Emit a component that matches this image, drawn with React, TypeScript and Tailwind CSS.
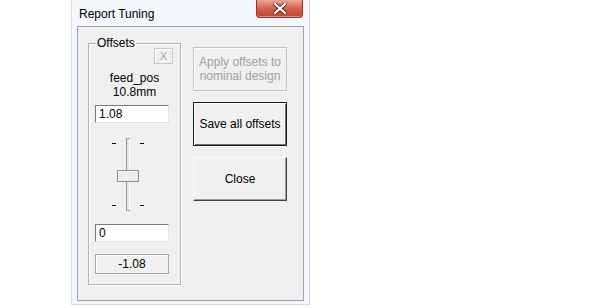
import React from 'react';

const font = "font-['Liberation_Sans',Arial,sans-serif]";

const SliderDrawing = () => (
  <svg width="60" height="80" viewBox="0 0 60 80" className="block">
    {/* ticks */}
    <line x1="14" y1="6.5" x2="18" y2="6.5" stroke="#000" />
    <line x1="42" y1="6.5" x2="46" y2="6.5" stroke="#000" />
    <line x1="14" y1="68.5" x2="18" y2="68.5" stroke="#000" />
    <line x1="42" y1="68.5" x2="46" y2="68.5" stroke="#000" />
    {/* track */}
    <rect x="28.5" y="1.5" width="3" height="72" fill="#e3e3e3" stroke="#9c9c9c" />
    <line x1="31.5" y1="2" x2="31.5" y2="73" stroke="#fff" />
    {/* thumb */}
    <rect x="19.5" y="33.5" width="21" height="11" fill="#ececec" stroke="#8e8e8e" />
    <line x1="20" y1="34.5" x2="40" y2="34.5" stroke="#fff" />
    <line x1="20.5" y1="34" x2="20.5" y2="44" stroke="#fff" />
  </svg>
);

const Field = ({ value }: { value: string }) => (
  <div className="ml-[6px] h-[18px] w-[74px] border border-t-[#7a7a7a] border-l-[#7a7a7a] border-b-[#e3e3e3] border-r-[#e3e3e3] bg-white pl-[3px] text-[12px] leading-[16px] text-black">
    {value}
  </div>
);

const WinButton = ({ children, variant }: { children: React.ReactNode; variant: 'disabled' | 'default' | 'normal' }) => {
  const cls =
    variant === 'disabled'
      ? 'border border-[#c4c4c4] text-[#a0a0a0] shadow-[inset_1px_1px_0_#fff]'
      : variant === 'default'
      ? 'border border-[#1e1e1e] text-black shadow-[inset_1px_1px_0_#fff,inset_-1px_-1px_0_#6f6f6f]'
      : 'border border-t-[#fafafa] border-l-[#fafafa] border-r-[#404040] border-b-[#404040] text-black shadow-[inset_-1px_-1px_0_#a0a0a0]';
  return (
    <div className={`flex h-[44px] w-[94px] items-center justify-center bg-[#f0f0f0] text-center text-[12px] leading-[14px] ${cls}`}>
      {children}
    </div>
  );
};

export default function App() {
  return (
    <div className={`h-[308px] w-[600px] bg-white ${font}`}>
      <div className="ml-[71px] flex h-[305px] w-[239px] flex-col border-x border-b border-[#d3dbe5] bg-[#f4f7fb]">
        {/* title bar */}
        <div className="flex h-[26px] items-start">
          <div className="pl-[7px] pt-[7px] text-[12px] leading-[14px] text-black">Report Tuning</div>
          <div className="ml-auto mr-[6px] flex h-[18px] w-[47px] items-center justify-center rounded-b-[4px] border border-t-0 border-[#8b3a2a] bg-gradient-to-b from-[#e9a796] via-[#d2624b] to-[#c2402a] shadow-[inset_0_-1px_0_#e58e78]">
            <svg width="14" height="11" viewBox="0 0 14 11">
              <path d="M2 1 L12 10 M12 1 L2 10" stroke="#5a2418" strokeWidth="4" strokeLinecap="square" />
              <path d="M2 1 L12 10 M12 1 L2 10" stroke="#fff" strokeWidth="2.2" strokeLinecap="square" />
            </svg>
          </div>
        </div>
        {/* client area */}
        <div className="mx-[5px] mb-[3px] flex flex-1 border border-[#9ba5b0] bg-[#f0f0f0]">
          {/* group box */}
          <div className="relative ml-[10px] mt-[16px] flex h-[242px] w-[93px] flex-col border border-[#b4b4b4] shadow-[1px_1px_0_#fff,inset_1px_1px_0_#fff]">
            <div className="absolute left-[7px] top-[-8px] bg-[#f0f0f0] px-[1px] text-[12px] leading-[14px] text-black">Offsets</div>
            <div className="ml-[65px] mt-[4px] flex h-[16px] w-[19px] items-center justify-center border border-[#c8c8c8] text-[11px] leading-[12px] text-[#a8a8a8] shadow-[inset_1px_1px_0_#fff]">
              X
            </div>
            <div className="mt-[7px] text-center text-[12px] leading-[14px] text-black">feed_pos</div>
            <div className="text-center text-[12px] leading-[14px] text-black">10.8mm</div>
            <div className="mt-[6px]">
              <Field value="1.08" />
            </div>
            <div className="ml-[9px] mt-[14px]">
              <SliderDrawing />
            </div>
            <div className="mt-[7px]">
              <Field value="0" />
            </div>
            <div className="ml-[6px] mt-[12px] flex h-[20px] w-[74px] items-center justify-center border border-[#a9a9a9] text-[12px] text-black shadow-[inset_1px_1px_0_#fff]">
              -1.08
            </div>
          </div>
          {/* buttons */}
          <div className="ml-[12px] mt-[20px] flex flex-col gap-[11px]">
            <WinButton variant="disabled">
              Apply offsets to
              <br />
              nominal design
            </WinButton>
            <WinButton variant="default">Save all offsets</WinButton>
            <WinButton variant="normal">Close</WinButton>
          </div>
        </div>
      </div>
    </div>
  );
}
